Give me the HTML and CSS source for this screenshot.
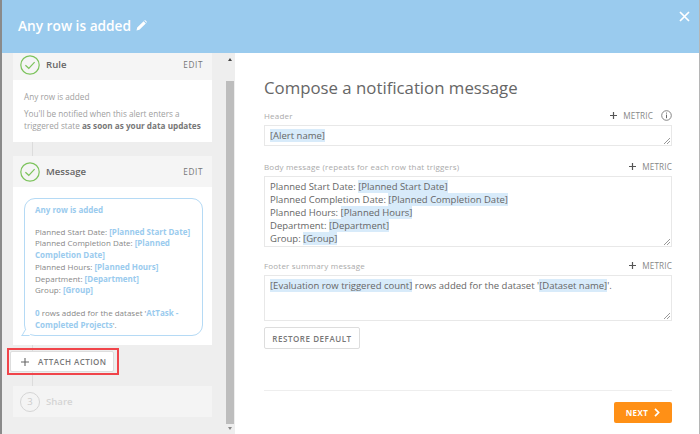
FILE: index.html
```html
<!DOCTYPE html>
<html lang="en">
<head>
<meta charset="utf-8">
<title>Any row is added</title>
<link rel="stylesheet" href="styles.css">
</head>
<body>
<div class="modal">
  <header class="top">
    <h1 class="alert-name">Any row is added</h1>
    <svg class="pencil" width="11" height="11" viewBox="0 0 11 11"><path d="M0.5 10.5 L1.2 7.6 L7.6 1.2 L9.8 3.4 L3.4 9.8 Z M8.3 .6 L9 0 L11 2 L10.4 2.7 Z" fill="#fff"/></svg>
    <svg class="close" width="11" height="11" viewBox="0 0 11 11"><path d="M1 1 L10 10 M10 1 L1 10" stroke="#fff" stroke-width="1.7" fill="none"/></svg>
  </header>
  <div class="content">
    <aside class="side">
      <div class="steps">
        <section class="card">
          <div class="card-head rule-head">
            <svg class="check" width="20" height="20" viewBox="0 0 20 20"><circle cx="10" cy="10" r="9.2" fill="none" stroke="#7cc35c" stroke-width="1.2"/><path d="M5.4 10.2 L8.8 13.3 L14.6 7.2" fill="none" stroke="#7cc35c" stroke-width="1.2"/></svg>
            <span class="step-name">Rule</span>
            <span class="edit">EDIT</span>
          </div>
          <div class="card-body rule-body">
            <p>Any row is added</p>
            <p>You'll be notified when this alert enters a triggered state <b>as soon as your data updates</b></p>
          </div>
        </section>
        <section class="card message-card">
          <div class="card-head">
            <svg class="check" width="20" height="20" viewBox="0 0 20 20"><circle cx="10" cy="10" r="9.2" fill="none" stroke="#7cc35c" stroke-width="1.2"/><path d="M5.4 10.2 L8.8 13.3 L14.6 7.2" fill="none" stroke="#7cc35c" stroke-width="1.2"/></svg>
            <span class="step-name">Message</span>
            <span class="edit">EDIT</span>
          </div>
          <div class="card-body msg-body">
            <div class="bubble">
              <p class="bubble-title">Any row is added</p>
              <p>Planned Start Date: <b>[Planned Start Date]</b><br>Planned Completion Date: <b>[Planned Completion Date]</b><br>Planned Hours: <b>[Planned Hours]</b><br>Department: <b>[Department]</b><br>Group: <b>[Group]</b></p>
              <p><b>0</b> rows added for the dataset '<b>AtTask - Completed Projects</b>'.</p>
            </div>
          </div>
        </section>
        <div class="attach-wrap">
          <button class="attach"><svg class="plus" width="8" height="8" viewBox="0 0 8 8"><path d="M4 0 V8 M0 4 H8" stroke="#666" stroke-width="1.1"/></svg>ATTACH ACTION</button>
        </div>
        <section class="card share">
          <span class="num">3</span>
          <span class="share-name">Share</span>
        </section>
      </div>
      <div class="scrollbar">
        <span class="arrow up"></span>
        <span class="thumb"></span>
        <span class="arrow down"></span>
      </div>
    </aside>
    <main class="main">
      <h2 class="title">Compose a notification message</h2>
      <div class="field field-header">
        <div class="label-row">
          <label>Header</label>
          <span class="metric"><svg class="m-plus" width="7" height="7" viewBox="0 0 7 7"><path d="M3.5 0 V7 M0 3.5 H7" stroke="#555" stroke-width="1.2"/></svg>METRIC</span>
          <svg class="info" width="11" height="11" viewBox="0 0 11 11"><circle cx="5.5" cy="5.5" r="4.8" fill="none" stroke="#777" stroke-width=".9"/><path d="M5.5 4.6 V8.2 M5.5 2.6 V3.6" stroke="#666" stroke-width="1"/></svg>
        </div>
        <div class="box box-header"><mark>[Alert name]</mark><span class="grip"></span></div>
      </div>
      <div class="field field-body">
        <div class="label-row">
          <label>Body message (repeats for each row that triggers)</label>
          <span class="metric"><svg class="m-plus" width="7" height="7" viewBox="0 0 7 7"><path d="M3.5 0 V7 M0 3.5 H7" stroke="#555" stroke-width="1.2"/></svg>METRIC</span>
        </div>
        <div class="box box-body">Planned Start Date: <mark>[Planned Start Date]</mark><br>Planned Completion Date: <mark>[Planned Completion Date]</mark><br>Planned Hours: <mark>[Planned Hours]</mark><br>Department: <mark>[Department]</mark><br>Group: <mark>[Group]</mark><span class="grip"></span></div>
      </div>
      <div class="field field-footer">
        <div class="label-row">
          <label>Footer summary message</label>
          <span class="metric"><svg class="m-plus" width="7" height="7" viewBox="0 0 7 7"><path d="M3.5 0 V7 M0 3.5 H7" stroke="#555" stroke-width="1.2"/></svg>METRIC</span>
        </div>
        <div class="box box-footer"><mark>[Evaluation row triggered count]</mark> rows added for the dataset '<mark>[Dataset name]</mark>'.<span class="grip"></span></div>
      </div>
      <button class="restore">RESTORE DEFAULT</button>
      <div class="actions">
        <button class="next">NEXT
          <svg width="6" height="9" viewBox="0 0 6 9"><path d="M1 .8 L4.6 4.5 L1 8.2" fill="none" stroke="#fff" stroke-width="1.7"/></svg>
        </button>
      </div>
    </main>
  </div>
</div>
</body>
</html>
```
FILE: styles.css
```css
* { box-sizing: border-box; }
html, body { margin: 0; height: 100%; }
body { width: 700px; height: 434px; overflow: hidden; font-family: "Open Sans", "Noto Sans", sans-serif; color: #666; background: #fff; }
p { margin: 0; }
.modal { width: 700px; height: 434px; border-left: 2px solid #8a8a8a; border-right: 1px solid #b5b5b5; display: flex; flex-direction: column; }
.top { height: 53px; flex: none; background: #9acbee; display: flex; align-items: center; padding: 0 16px 2px; position: relative; }
.alert-name { margin: 0; font-size: 13.7px; font-weight: 600; color: #fff; line-height: 20px; }
.pencil { margin-left: 5px; }
.close { position: absolute; right: 9px; top: 11px; }
.content { flex: 1; display: flex; min-height: 0; }
.side { width: 233px; flex: none; background: #eeeeee; display: flex; position: relative; }
.steps { width: 223px; padding-left: 11px; position: relative; }
.steps::before { content: ""; position: absolute; left: 30px; top: 80px; bottom: 20px; width: 1px; background: #dcdcdc; }
.card { width: 199px; background: #fff; position: relative; }
.card-head { height: 31px; background: #f5f5f5; display: flex; align-items: center; padding: 0 9px 0 7px; }
.rule-head { height: 27px; padding-bottom: 4px; }
.check { flex: none; }
.step-name { margin-left: 6px; font-size: 9.6px; font-weight: 600; color: #666; flex: 1; }
.edit { font-size: 8.2px; letter-spacing: .6px; font-weight: 400; color: #777; }
.card-body { font-size: 8.2px; line-height: 12px; color: #a0a0a0; }
.rule-body { height: 62px; padding: 11px 11px 0; }
.rule-body p + p { margin-top: 5px; }
.rule-body b { color: #777; font-weight: 700; }
.message-card { margin-top: 14px; }
.msg-body { height: 158px; padding: 11px 9px 0 11px; }
.bubble { position: relative; height: 138px; border: 1px solid #b5daf5; border-radius: 11px; padding: 5px 10px; font-size: 8px; line-height: 11.7px; color: #888; }
.bubble::after { content: ""; position: absolute; left: -2px; bottom: -1px; width: 7px; height: 5px; background: #fff; border-bottom: 1px solid #b5daf5; border-left: 1px solid #b5daf5; transform: skewX(-30deg); }
.bubble b { color: #9acbee; font-weight: 700; }
.bubble-title { color: #9acbee; font-weight: 700; margin-bottom: 10px; }
.bubble p + p + p { margin-top: 11px; }
.attach-wrap { position: relative; z-index: 1; margin: 3px 0 0 -6px; width: 112px; height: 27px; border: 2px solid #f0444a; padding: 1px; }
.attach { display: flex; align-items: center; width: 104px; height: 21px; background: #fff; border: 1px solid #ddd; border-radius: 2px; padding: 0 0 0 10px; font: 600 8px "Open Sans", sans-serif; letter-spacing: .45px; color: #777; }
.plus { margin-right: 9px; flex: none; }
.share { margin-top: 11px; height: 31px; background: #f4f4f4; display: flex; align-items: center; padding-left: 7px; }
.num { width: 20px; height: 20px; border: 1px solid #d5d5d5; border-radius: 50%; display: flex; align-items: center; justify-content: center; font-size: 9.5px; color: #ccc; }
.share-name { margin-left: 6px; font-size: 9.6px; font-weight: 600; color: #d5d5d5; }
.scrollbar { width: 10px; display: flex; flex-direction: column; align-items: center; }
.thumb { width: 8px; flex: 1; background: #bdbdbd; margin: 8px 0 3px; }
.arrow { flex: none; width: 0; height: 0; border-left: 2.5px solid transparent; border-right: 2.5px solid transparent; }
.up { border-bottom: 3px solid #444; margin-top: 5px; margin-bottom: 12px; }
.down { border-top: 3px solid #888; margin-bottom: 4px; }
.main { flex: 1; padding: 0 27px 0 29px; display: flex; flex-direction: column; }
.title { margin: 25px 0 0; font-size: 16.8px; line-height: 20px; font-weight: 400; color: #666; }
.field-header { margin-top: 11px; }
.field-body { margin-top: 14px; }
.field-footer { margin-top: 12px; }
.label-row { display: flex; align-items: center; height: 13px; margin-bottom: 3px; justify-content: flex-end; }
.label-row label { font-size: 8px; color: #aaa; flex: 1; letter-spacing: .2px; }
.metric { font-size: 8.2px; color: #888; letter-spacing: .15px; display: flex; align-items: center; }
.m-plus { margin-right: 6px; }
.info { margin-left: 8px; }
.box { position: relative; border: 1px solid #e8e8e8; background: #fff; font-size: 9.5px; line-height: 13px; color: #666; padding: 2.5px 5px; }
.box-header { height: 21px; }
.box-body { height: 71px; }
.box-footer { height: 46px; }
mark { background: #d8ebfa; color: #666; }
.grip { position: absolute; right: 1px; bottom: 1px; width: 6px; height: 6px; background: linear-gradient(135deg, transparent 45%, #999 45%, #999 55%, transparent 55%, transparent 70%, #999 70%, #999 80%, transparent 80%); }
.restore { margin-top: 6px; width: 96px; height: 22px; border: 1px solid #ddd; border-radius: 2px; background: #fff; font: 600 8px "Open Sans", sans-serif; letter-spacing: .55px; color: #777; padding: 0; flex: none; }
.actions { margin-top: 41px; border-top: 1px solid #eee; padding-top: 11px; display: flex; justify-content: flex-end; }
.next { width: 58px; height: 21px; border: 0; border-radius: 2px; background: #ff9016; color: #fff; font: 700 8px "Open Sans", sans-serif; letter-spacing: .4px; display: flex; align-items: center; justify-content: center; gap: 6px; padding: 0; }
```
